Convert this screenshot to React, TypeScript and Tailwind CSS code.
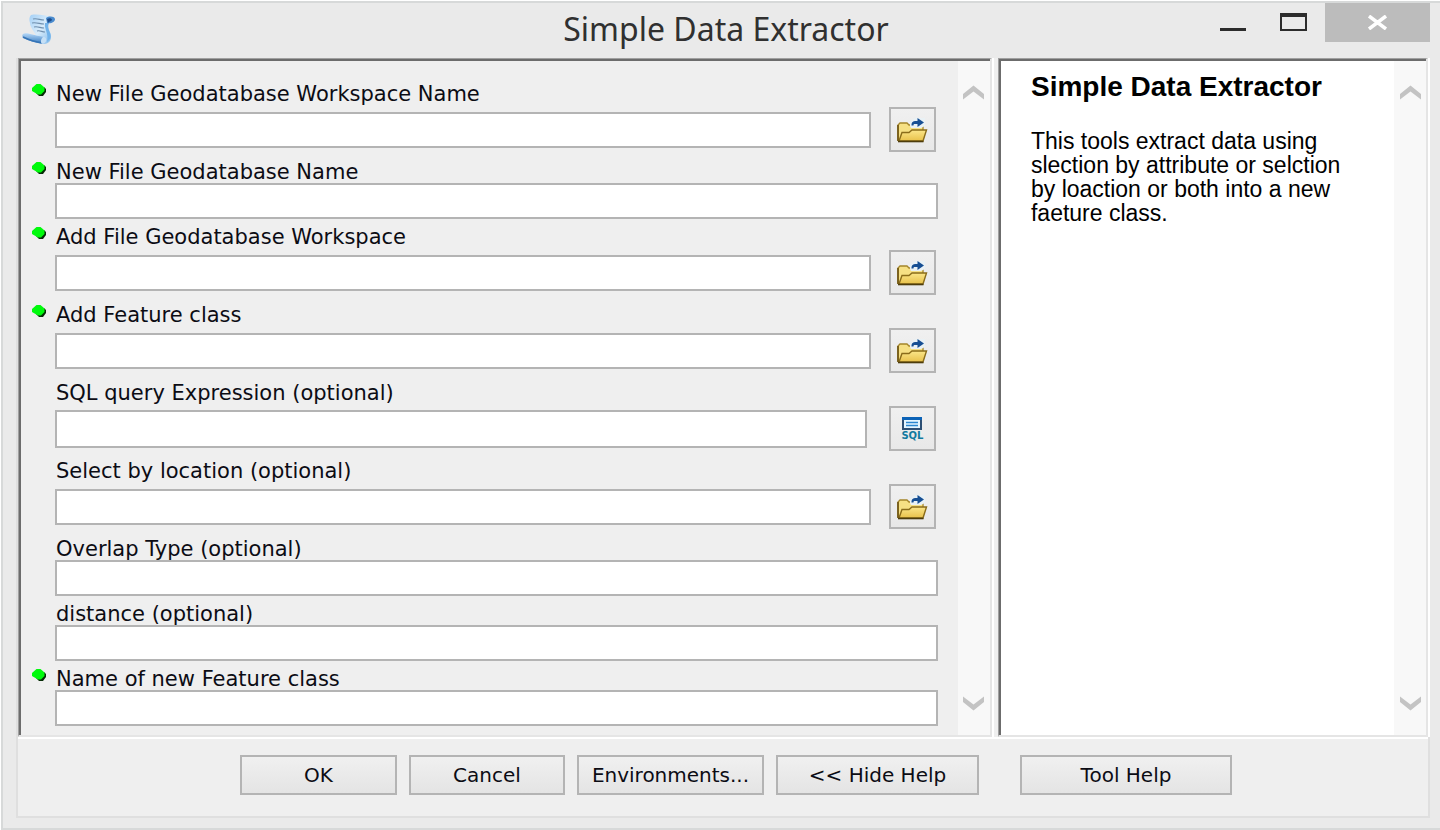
import React from "react";

type FieldKind = "folder" | "sql" | "plain";

interface Field {
  id: string;
  label: string;
  kind: FieldKind;
  required?: boolean;
}

const fields: Field[] = [
  { id: "new-workspace", label: "New File Geodatabase Workspace Name", kind: "folder", required: true },
  { id: "new-gdb", label: "New File Geodatabase Name", kind: "plain", required: true },
  { id: "add-workspace", label: "Add File Geodatabase Workspace", kind: "folder", required: true },
  { id: "add-feature", label: "Add Feature class", kind: "folder", required: true },
  { id: "sql-query", label: "SQL query Expression (optional)", kind: "sql" },
  { id: "select-location", label: "Select by location (optional)", kind: "folder" },
  { id: "overlap", label: "Overlap Type (optional)", kind: "plain" },
  { id: "distance", label: "distance (optional)", kind: "plain" },
  { id: "new-feature", label: "Name of new Feature class", kind: "plain", required: true },
];

function ScrollIcon() {
  return (
    <svg width="34" height="32" viewBox="0 0 34 32" aria-hidden="true">
      <defs>
        <linearGradient id="paper" x1="0" y1="0" x2="1" y2="1">
          <stop offset="0" stopColor="#a4d0f6" />
          <stop offset="0.5" stopColor="#d8ecfb" />
          <stop offset="1" stopColor="#7db8ea" />
        </linearGradient>
        <linearGradient id="roll" x1="0" y1="0" x2="0" y2="1">
          <stop offset="0" stopColor="#b5d8f8" />
          <stop offset="1" stopColor="#3578bd" />
        </linearGradient>
      </defs>
      <path d="M9 1C15 0 22 1 30 3L26 9C24 14 30 18 29 24C28 28 26 30 20 30L14 25C16 20 8 15 8 9C7 6 7 3 9 1Z" fill="url(#paper)" />
      <path d="M23 9C22 15 27 19 25 28L28 25C31 20 24 15 27 9Z" fill="#72b3ea" />
      <path d="M24 4C27 2 32 2 33 5C33 8 29 10 25 9Z" fill="#4a8bce" />
      <path d="M25 5C27 4 30 4 30 6C29 8 27 7 26 9Z" fill="#1d4d8c" />
      <path d="M1 20C4 18 9 21 22 23L21 30C14 29 7 27 1 24C0 22 0 21 1 20Z" fill="url(#roll)" />
      <path d="M1 23C7 26 14 28 21 29" fill="none" stroke="#3674b6" strokeWidth="1.5" />
      <path d="M21 23C25 22 26 29 20 30C18 28 19 25 21 23Z" fill="#c6e0f6" />
      <path d="M11 5C15 4 18 6 22 6M10 9C14 8 18 10 22 10M12 13C16 12 18 14 22 14M15 17C18 16 20 18 23 18" fill="none" stroke="#6f8fae" strokeWidth="1.2" />
    </svg>
  );
}

function FolderIcon() {
  return (
    <svg width="32" height="26" viewBox="0 0 32 26" aria-hidden="true">
      <defs>
        <linearGradient id="folder" x1="0" y1="0" x2="0" y2="1">
          <stop offset="0" stopColor="#fbe68a" />
          <stop offset="1" stopColor="#e8c14a" />
        </linearGradient>
      </defs>
      <path d="M2 23V8L4 6H11L13 8H27V13L24 23Z" fill="#f6e084" stroke="#a4852a" strokeWidth="1.3" />
      <path d="M2 24V8" stroke="#6b5210" strokeWidth="1.6" />
      <path d="M3 24L6 15.500H13L16 13H30.500L27 24Z" fill="url(#folder)" stroke="#8a6c1a" strokeWidth="1.4" />
      <path d="M2 24.500H27.500" stroke="#4d3c0c" strokeWidth="1.6" />
      <path d="M14 9V4L19 1H29L29 9L25 11H15Z" fill="#e9f1f5" />
      <path d="M15.500 8.500C15.500 5 17 4 20 4H21.500V1L28 5.500L21.500 10V7H19C17.500 7 17.500 7.500 17.500 8.500Z" fill="#174f93" />
    </svg>
  );
}

function SqlIcon() {
  return (
    <span className="flex flex-col items-center pt-px">
      <svg width="20" height="13" viewBox="0 0 20 13" aria-hidden="true">
        <rect x="1" y="1" width="18" height="11" fill="#e4f5ff" stroke="#2d4f74" strokeWidth="2" />
        <path d="M0 1.500H20" stroke="#0b62b6" strokeWidth="3" />
        <path d="M4 5.500H16M4 8.500H16" stroke="#2a86cf" strokeWidth="1.300" />
      </svg>
      <span className="font-['DejaVu_Sans',sans-serif] text-[10px] leading-3 font-bold text-[#137a9f]">SQL</span>
    </span>
  );
}

function Bullet() {
  return (
    <svg width="15" height="14" viewBox="0 0 15 14" aria-hidden="true">
      <path d="M5 4H12L14 6V9L11 13H7L4 10Z" fill="#062c06" />
      <path d="M4.500 1H8.500L12.500 4.500V8L9 11.500H6L0 8V5Z" fill="#00fa0c" />
    </svg>
  );
}

function ScrollBar() {
  return (
    <div className="flex w-8 shrink-0 flex-col items-center justify-between bg-[#f8f8f8] pt-6 pb-6">
      <button type="button" aria-label="Scroll up">
        <svg width="21" height="15" viewBox="0 0 21 15" aria-hidden="true">
          <path d="M0 9L10.500 0.500L21 9V14.500L10.500 6.500L0 14.500Z" fill="#c3c3c3" />
        </svg>
      </button>
      <button type="button" aria-label="Scroll down">
        <svg width="21" height="15" viewBox="0 0 21 15" aria-hidden="true">
          <path d="M0 0.500L10.500 8.500L21 0.500V6L10.500 14.500L0 6Z" fill="#c3c3c3" />
        </svg>
      </button>
    </div>
  );
}

function FieldRow({ field }: { field: Field }) {
  const input = "block min-w-0 flex-1 border-2 border-[#b4b4b4] bg-white px-2 text-lg outline-none";
  return (
    <div className={field.kind === "plain" ? "pb-[7px]" : "pb-[9px]"}>
      <div className="flex h-[22px]">
        <span className="w-6 shrink-0">{field.required && <Bullet />}</span>
        <label htmlFor={field.id} className="text-[21px] leading-[22px] whitespace-nowrap">
          {field.label}
        </label>
      </div>
      {field.kind === "plain" ? (
        <div className="flex pl-[23px]">
          <input id={field.id} type="text" className={`${input} h-9`} />
        </div>
      ) : (
        <div className="flex items-center justify-between gap-[18px] pt-[2px] pr-[2px] pl-[23px]">
          <div className={field.kind === "sql" ? "flex flex-1 pr-1" : "flex flex-1"}>
            <input id={field.id} type="text" className={field.kind === "sql" ? `${input} h-[38px]` : `${input} h-9`} />
          </div>
          <button
            type="button"
            aria-label={field.kind === "sql" ? "Build query" : "Browse"}
            className="flex h-[45px] w-[47px] items-center justify-center border-2 border-[#b4b4b4] bg-linear-to-b from-[#f0f0f0] to-[#e8e8e8]"
          >
            {field.kind === "sql" ? <SqlIcon /> : <FolderIcon />}
          </button>
        </div>
      )}
    </div>
  );
}

function DialogButton({ className, children }: { className: string; children: React.ReactNode }) {
  return (
    <button
      type="button"
      className={`h-10 border-2 border-[#b4b4b4] bg-linear-to-b from-[#f0f0f0] to-[#e4e4e4] text-[20px] whitespace-nowrap ${className}`}
    >
      {children}
    </button>
  );
}

const sunken =
  "border-t border-l border-r-2 border-b-2 border-t-[#a0a0a0] border-l-[#a0a0a0] border-r-[#e5e5e5] border-b-[#e5e5e5] pt-0.5 pl-0.5 shadow-[inset_2px_2px_0_#6c6c6c,2px_0_0_#fff]";

export default function App() {
  return (
    <div className="min-h-screen bg-white pt-px pl-px font-['DejaVu_Sans',sans-serif] text-[#0c0c14]">
      <main className="flex min-h-[829px] flex-col border-2 border-r-0 border-[#d7d9d9] bg-[#eaeaea] pr-[10px] pb-[10px] pl-[13px]">
        <header className="flex h-[55px] items-start">
          <div className="flex flex-1 pt-[11px] pl-1.5">
            <ScrollIcon />
          </div>
          <h1 className="pt-[6px] font-['Noto_Sans',sans-serif] text-[32px] leading-10 text-[#303030]">Simple Data Extractor</h1>
          <div className="flex flex-1 items-start justify-end">
            <button type="button" aria-label="Minimize" className="mt-[25px] mr-[34px] h-[3px] w-[26px] bg-[#2c2c2c]" />
            <button type="button" aria-label="Maximize" className="mt-[10px] mr-[18px] h-[18px] w-[27px] border-2 border-t-4 border-[#2c2c2c]" />
            <button type="button" aria-label="Close" className="flex h-[39px] w-[105px] items-center justify-center bg-[#bcbcbc]">
              <svg width="21" height="15" viewBox="0 0 21 15" aria-hidden="true">
                <path d="M2 1L19 14M19 1L2 14" stroke="#fff" strokeWidth="3.500" />
              </svg>
            </button>
          </div>
        </header>

        <div className="flex flex-1 flex-col border-2 border-t-0 border-[#dfdfdf] bg-[#efefef]">
          <div className="flex h-[681px] gap-1.5 border-b-2 border-white">
            <form className={`flex min-w-0 flex-1 ${sunken}`} onSubmit={(e) => e.preventDefault()}>
              <div className="min-w-0 flex-1 pt-[22px] pr-5 pl-[11px]">
                {fields.map((field) => (
                  <FieldRow key={field.id} field={field} />
                ))}
              </div>
              <ScrollBar />
            </form>
            <aside className={`flex w-[30.5%] shrink-0 bg-white ${sunken}`}>
              <div className="min-w-0 flex-1 pt-3 pl-[30px] font-['Liberation_Sans',Arial,sans-serif] text-black">
                <h2 className="text-[28px] leading-7 font-bold">Simple Data Extractor</h2>
                <p className="max-w-[340px] pt-7 text-[23px] leading-6">
                  This tools extract data using slection by attribute or selction by loaction or both into a new faeture class.
                </p>
              </div>
              <ScrollBar />
            </aside>
          </div>

          <footer className="flex pt-4 pb-5 pl-[222px]">
            <DialogButton className="mr-3 w-[157px]">OK</DialogButton>
            <DialogButton className="mr-3 w-[156px]">Cancel</DialogButton>
            <DialogButton className="mr-3 w-[187px]">Environments...</DialogButton>
            <DialogButton className="mr-[41px] w-[203px]">&lt;&lt; Hide Help</DialogButton>
            <DialogButton className="w-[212px]">Tool Help</DialogButton>
          </footer>
        </div>
      </main>
    </div>
  );
}
